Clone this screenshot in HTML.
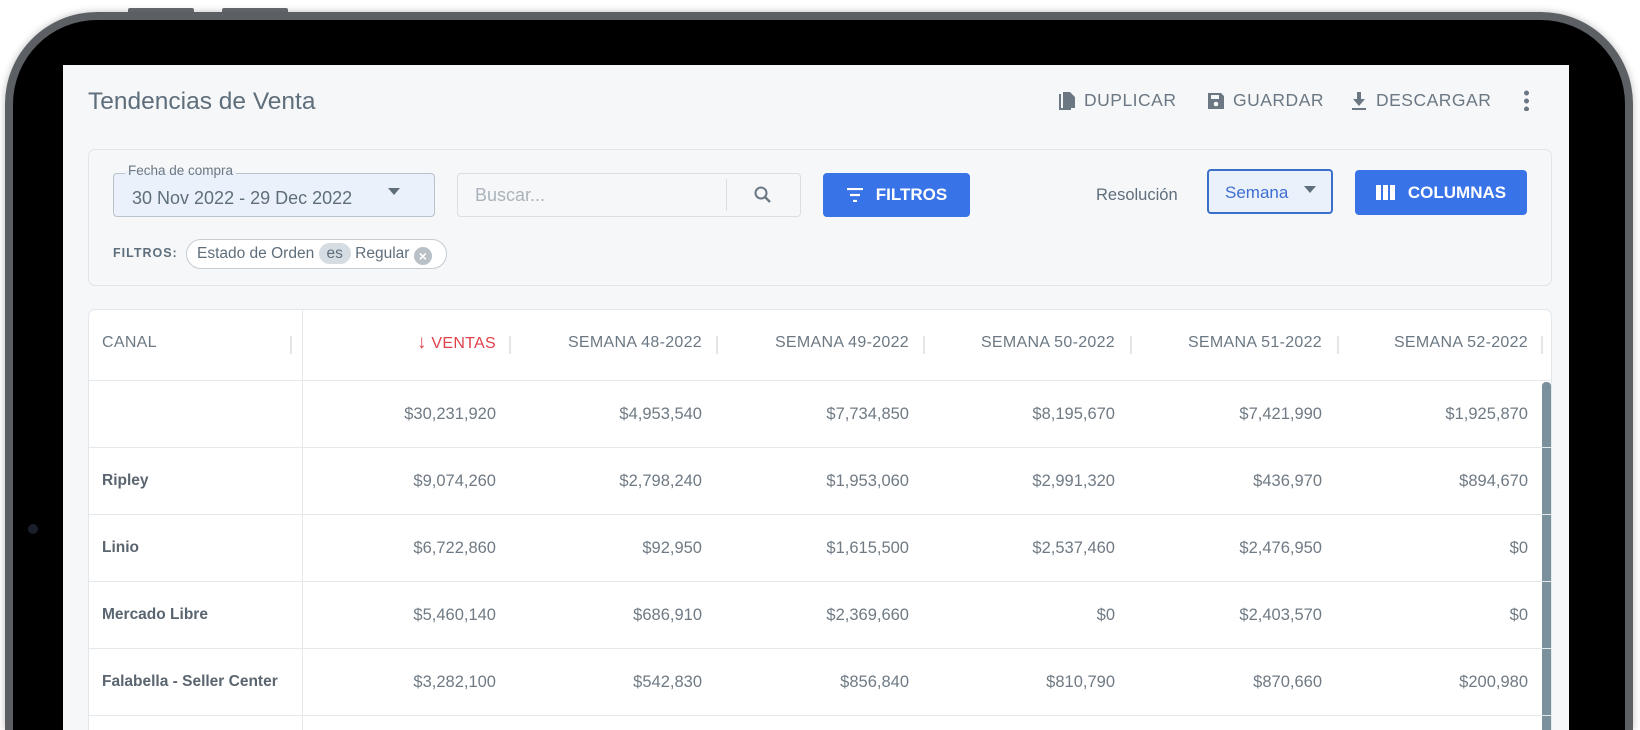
<!DOCTYPE html>
<html><head><meta charset="utf-8"><style>
*{box-sizing:border-box;margin:0;padding:0}
html,body{width:1640px;height:730px;overflow:hidden}
body{background:#fff;font-family:"Liberation Sans",sans-serif;position:relative}
.frame{position:absolute;left:5px;top:12px;width:1628px;height:718px;border-radius:92px 92px 0 0;background:#000;border:8px solid #5c6064;border-bottom:none;box-shadow:0 0 8px rgba(0,0,0,.25)}
.btn-top{position:absolute;top:8px;height:5px;width:66px;background:#6a6e72;border-radius:2px 2px 0 0}
.screen{position:absolute;left:63px;top:65px;width:1506px;height:665px;background:#f5f7f9;overflow:hidden}
.abs{position:absolute}
.t{color:#5f6e7b}
.title{left:25px;top:23px;font-size:24.5px;color:#5f6e7b}
.act{top:25px;font-size:17.5px;color:#6b7883;letter-spacing:.5px;display:flex;align-items:center;gap:8px}
.panel{left:25px;top:84px;width:1464px;height:137px;border:1px solid #dfe5ea;border-radius:7px;background:#f5f7f9}
.date{left:50px;top:108px;width:322px;height:44px;border:1px solid #b8c3cc;border-radius:4px;background:#eaf1fa}
.lbl{left:62px;top:98px;font-size:13.5px;color:#6b7883;background:linear-gradient(#f5f7f9 55%,#eaf1fa 55%);padding:0 3px}
.search{left:394px;top:108px;width:344px;height:44px;border:1px solid #d9dfe5;border-radius:4px;background:#f5f7f9}
.blue{background:#3873e8;border-radius:4px;color:#fff;font-weight:bold;font-size:17px;display:flex;align-items:center;justify-content:center;gap:12px}
.card{left:25px;top:244px;width:1464px;height:421px;background:#fff;border:1px solid #e3e8ec;border-bottom:none;border-radius:7px 7px 0 0;overflow:hidden}
.row{position:absolute;left:0;width:1464px;height:67px;border-top:1px solid #e6e9ec}
.c{position:absolute;top:0;height:66px;line-height:66px;font-size:16.5px;color:#6f7a84;text-align:right;white-space:nowrap}
.n{left:13px;text-align:left;font-weight:bold;color:#5a6570;font-size:15.5px}
.h{font-size:16px;color:#6b7883;letter-spacing:.3px}
.sep{position:absolute;top:26px;width:2px;height:18px;background:#e3e6e9}
</style></head><body>
<div class="btn-top" style="left:128px"></div><div class="btn-top" style="left:222px"></div>
<div class="frame"></div>
<div class="abs" style="left:28px;top:524px;width:10px;height:10px;border-radius:50%;background:#1a1f2a"></div>
<div class="screen">
 <div class="abs title">Tendencias de Venta</div>
 <div class="abs act" style="left:995px"><svg width="18" height="20" viewBox="0 0 18 20"><path d="M1 3h2v14h10v2H1z M5 1h7l5 5v11H5z" fill="#6b7883"/></svg>DUPLICAR</div>
 <div class="abs act" style="left:1144px"><svg width="18" height="18" viewBox="0 0 18 18"><path d="M1 1h13l3 3v13H1z" fill="#6b7883"/><rect x="4" y="3" width="8" height="4" fill="#f5f7f9"/><circle cx="9" cy="12" r="2.3" fill="#f5f7f9"/></svg>GUARDAR</div>
 <div class="abs act" style="left:1287px"><svg width="18" height="20" viewBox="0 0 18 20"><path d="M7 1h4v7h4l-6 7-6-7h4z" fill="#6b7883"/><rect x="2" y="17" width="14" height="2" fill="#6b7883"/></svg>DESCARGAR</div>
 <div class="abs" style="left:1461px;top:24px;width:5px;height:22px;background:radial-gradient(circle,#6b7883 2.3px,transparent 2.6px) 0 0/5px 8px repeat-y"></div>
 <div class="abs panel"></div>
 <div class="abs date"></div>
 <div class="abs lbl">Fecha de compra</div>
 <div class="abs t" style="left:69px;top:123px;font-size:18px">30 Nov 2022 - 29 Dec 2022</div>
 <div class="abs" style="left:325px;top:123px;border:6px solid transparent;border-top:7px solid #5f6e7b"></div>
 <div class="abs search"></div>
 <div class="abs" style="left:412px;top:120px;font-size:18px;color:#aab3bb">Buscar...</div>
 <div class="abs" style="left:663px;top:114px;width:1px;height:32px;background:#d9dfe5"></div>
 <svg class="abs" style="left:690px;top:120px" width="20" height="20" viewBox="0 0 20 20"><circle cx="8" cy="8" r="5.5" fill="none" stroke="#6b7883" stroke-width="2"/><path d="M12 12l5 5" stroke="#6b7883" stroke-width="2.4"/></svg>
 <div class="abs blue" style="left:760px;top:108px;width:147px;height:44px"><svg width="18" height="14" viewBox="0 0 18 14"><path d="M1 1h16M4 7h10M7 13h4" stroke="#fff" stroke-width="2.2"/></svg>FILTROS</div>
 <div class="abs t" style="left:1033px;top:121px;font-size:16.5px">Resolución</div>
 <div class="abs" style="left:1144px;top:104px;width:126px;height:45px;border:2px solid #3a70c9;border-radius:4px;background:#eaf1fb;color:#3d6fd1;font-size:17px;padding:12px 0 0 16px">Semana</div>
 <div class="abs" style="left:1241px;top:121px;border:6px solid transparent;border-top:7px solid #5f6e7b"></div>
 <div class="abs blue" style="left:1292px;top:105px;width:172px;height:45px"><svg width="20" height="15" viewBox="0 0 20 15"><rect x="0" y="0" width="5" height="15" fill="#fff"/><rect x="7" y="0" width="5" height="15" fill="#fff"/><rect x="14" y="0" width="5" height="15" fill="#fff"/></svg>COLUMNAS</div>
 <div class="abs" style="left:50px;top:181px;font-size:12.5px;color:#5f6e7b;font-weight:bold;letter-spacing:1px">FILTROS:</div>
 <div class="abs" style="left:123px;top:174px;width:261px;height:30px;border:1px solid #c5ccd2;border-radius:15px;background:#fff;font-size:15.5px;color:#5f6e7b;line-height:28px;padding-left:10px;white-space:nowrap">Estado de Orden <span style="background:#d5dde2;border-radius:11px;padding:2px 8px">es</span> Regular <span style="display:inline-block;width:18px;height:18px;border-radius:50%;background:#b9c0c6;color:#fff;font-size:14px;line-height:18px;text-align:center;vertical-align:-3px;font-weight:bold">×</span></div>
 <div class="abs card">
  <div class="abs" style="left:213px;top:0;width:1px;height:421px;background:#e6e9ec"></div>
  <div class="abs" style="left:1453px;top:72px;width:9px;height:349px;background:#7a909c;border-radius:4px 4px 0 0"></div>
  <div class="row" style="top:0;border-top:none;height:70px">
   <div class="c h" style="left:13px;text-align:left">CANAL</div>
   <div class="sep" style="left:201px"></div>
   <div class="c h" style="right:1057px;color:#e0424b"><span style="font-size:19px">↓</span> VENTAS</div><div class="sep" style="left:420px"></div>
   <div class="c h" style="right:851px">SEMANA 48-2022</div><div class="sep" style="left:627px"></div>
   <div class="c h" style="right:644px">SEMANA 49-2022</div><div class="sep" style="left:834px"></div>
   <div class="c h" style="right:438px">SEMANA 50-2022</div><div class="sep" style="left:1041px"></div>
   <div class="c h" style="right:231px">SEMANA 51-2022</div><div class="sep" style="left:1248px"></div>
   <div class="c h" style="right:25px">SEMANA 52-2022</div><div class="sep" style="left:1452px"></div>
  </div>
  <div class="row" style="top:70px"><div class="c" style="right:1057px">$30,231,920</div><div class="c" style="right:851px">$4,953,540</div><div class="c" style="right:644px">$7,734,850</div><div class="c" style="right:438px">$8,195,670</div><div class="c" style="right:231px">$7,421,990</div><div class="c" style="right:25px">$1,925,870</div></div>
  <div class="row" style="top:137px"><div class="c n">Ripley</div><div class="c" style="right:1057px">$9,074,260</div><div class="c" style="right:851px">$2,798,240</div><div class="c" style="right:644px">$1,953,060</div><div class="c" style="right:438px">$2,991,320</div><div class="c" style="right:231px">$436,970</div><div class="c" style="right:25px">$894,670</div></div>
  <div class="row" style="top:204px"><div class="c n">Linio</div><div class="c" style="right:1057px">$6,722,860</div><div class="c" style="right:851px">$92,950</div><div class="c" style="right:644px">$1,615,500</div><div class="c" style="right:438px">$2,537,460</div><div class="c" style="right:231px">$2,476,950</div><div class="c" style="right:25px">$0</div></div>
  <div class="row" style="top:271px"><div class="c n">Mercado Libre</div><div class="c" style="right:1057px">$5,460,140</div><div class="c" style="right:851px">$686,910</div><div class="c" style="right:644px">$2,369,660</div><div class="c" style="right:438px">$0</div><div class="c" style="right:231px">$2,403,570</div><div class="c" style="right:25px">$0</div></div>
  <div class="row" style="top:338px"><div class="c n">Falabella - Seller Center</div><div class="c" style="right:1057px">$3,282,100</div><div class="c" style="right:851px">$542,830</div><div class="c" style="right:644px">$856,840</div><div class="c" style="right:438px">$810,790</div><div class="c" style="right:231px">$870,660</div><div class="c" style="right:25px">$200,980</div></div>
  <div class="row" style="top:405px;height:16px"></div>
 </div>
</div>
</body></html>
